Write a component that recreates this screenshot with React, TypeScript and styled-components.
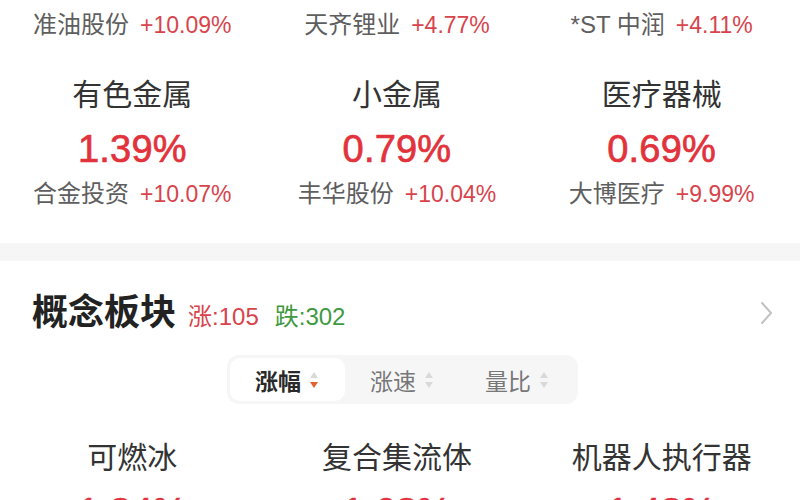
import React from "react";
import styled, { createGlobalStyle } from "styled-components";

const Global = createGlobalStyle`
  html, body { margin: 0; padding: 0; background: #ffffff; }
  body {
    width: 800px; height: 500px; overflow: hidden;
    font-family: "Liberation Sans", "Noto Sans CJK SC", sans-serif;
  }
`;

const Page = styled.div`
  width: 800px;
  display: flex;
  flex-direction: column;
`;

const Section = styled.section<{ $pad: string }>`
  background: #fff;
  padding: ${(p) => p.$pad};
`;

const Band = styled.div`
  height: 18px;
  background: #f6f6f6;
`;

const Grid = styled.div<{ $mt?: number }>`
  display: grid;
  grid-template-columns: repeat(3, 1fr);
  padding-right: 6px;
  margin-top: ${(p) => p.$mt ?? 0}px;
`;

const Card = styled.div`
  display: flex;
  flex-direction: column;
  align-items: center;
`;

const Name = styled.div`
  font-size: 30px;
  line-height: 36px;
  color: #333;
  white-space: nowrap;
`;

const Value = styled.div`
  margin-top: 14px;
  font-size: 38px;
  line-height: 44px;
  color: #e2323b;
  -webkit-text-stroke: 0.7px #e2323b;
  letter-spacing: 0.2px;
`;

const Lead = styled.div<{ $mt: number }>`
  margin-top: ${(p) => p.$mt}px;
  display: flex;
  align-items: baseline;
  gap: 11px;
  font-size: 24px;
  line-height: 30px;
  white-space: nowrap;
`;

const LeadName = styled.span`
  color: #5e5e5e;
`;

const LeadPct = styled.span`
  color: #d8444c;
  font-size: 23px;
`;

const Header = styled.div`
  display: flex;
  align-items: center;
  justify-content: space-between;
  padding: 0 27px 0 32px;
  height: 40px;
`;

const TitleWrap = styled.div`
  display: flex;
  align-items: baseline;
  gap: 12px;
`;

const Title = styled.h2`
  margin: 0;
  font-size: 36px;
  line-height: 40px;
  font-weight: 700;
  color: #222;
`;

const Counts = styled.span`
  display: inline-flex;
  gap: 16px;
`;

const Count = styled.span<{ $c: string }>`
  font-size: 24px;
  color: ${(p) => p.$c};
`;

const SegRow = styled.div`
  display: flex;
  justify-content: center;
  margin-top: 22px;
  padding-left: 4px;
`;

const Seg = styled.div`
  display: grid;
  grid-template-columns: repeat(3, 115px);
  padding: 3px;
  background: #f6f6f7;
  border-radius: 12px;
`;

const Tab = styled.div<{ $active?: boolean }>`
  height: 43px;
  display: flex;
  align-items: center;
  justify-content: center;
  gap: 8px;
  border-radius: 10px;
  background: ${(p) => (p.$active ? "#fff" : "transparent")};
  color: ${(p) => (p.$active ? "#2a2a2a" : "#777")};
  font-size: 23px;
  font-weight: ${(p) => (p.$active ? 600 : 400)};
`;

const Chevron = () => (
  <svg width="13" height="24" viewBox="0 0 13 24" fill="none">
    <path d="M2 2 L11 12 L2 22" stroke="#c2c2c2" strokeWidth="2" strokeLinecap="round" strokeLinejoin="round" />
  </svg>
);

const SortIcon = ({ active }: { active?: boolean }) => (
  <svg width="10" height="20" viewBox="0 0 10 20">
    <path d="M5 2 L9 8 L1 8 Z" fill="#d9d9d9" />
    <path d="M5 18 L9 12 L1 12 Z" fill={active ? "#e0622e" : "#d9d9d9"} />
  </svg>
);

type Item = { name: string; value: string; lead: string; pct: string };

const tail = [
  { lead: "准油股份", pct: "+10.09%" },
  { lead: "天齐锂业", pct: "+4.77%" },
  { lead: "*ST 中润", pct: "+4.11%" },
];

const industry: Item[] = [
  { name: "有色金属", value: "1.39%", lead: "合金投资", pct: "+10.07%" },
  { name: "小金属", value: "0.79%", lead: "丰华股份", pct: "+10.04%" },
  { name: "医疗器械", value: "0.69%", lead: "大博医疗", pct: "+9.99%" },
];

const concept: Item[] = [
  { name: "可燃冰", value: "1.84%", lead: "", pct: "" },
  { name: "复合集流体", value: "1.63%", lead: "", pct: "" },
  { name: "机器人执行器", value: "1.48%", lead: "", pct: "" },
];

export default function App() {
  return (
    <Page>
      <Global />
      <Section $pad="10px 0 34px">
        <Grid>
          {tail.map((t) => (
            <Card key={t.lead}>
              <Lead $mt={0}>
                <LeadName>{t.lead}</LeadName>
                <LeadPct>{t.pct}</LeadPct>
              </Lead>
            </Card>
          ))}
        </Grid>
        <Grid $mt={37}>
          {industry.map((c) => (
            <Card key={c.name}>
              <Name>{c.name}</Name>
              <Value>{c.value}</Value>
              <Lead $mt={8}>
                <LeadName>{c.lead}</LeadName>
                <LeadPct>{c.pct}</LeadPct>
              </Lead>
            </Card>
          ))}
        </Grid>
      </Section>
      <Band />
      <Section $pad="32px 0 0">
        <Header>
          <TitleWrap>
            <Title>概念板块</Title>
            <Counts>
              <Count $c="#d9434b">涨:105</Count>
              <Count $c="#3e9a40">跌:302</Count>
            </Counts>
          </TitleWrap>
          <Chevron />
        </Header>
        <SegRow>
          <Seg>
            <Tab $active>
              涨幅
              <SortIcon active />
            </Tab>
            <Tab>
              涨速
              <SortIcon />
            </Tab>
            <Tab>
              量比
              <SortIcon />
            </Tab>
          </Seg>
        </SegRow>
        <Grid $mt={36}>
          {concept.map((c) => (
            <Card key={c.name}>
              <Name>{c.name}</Name>
              <Value>{c.value}</Value>
            </Card>
          ))}
        </Grid>
      </Section>
    </Page>
  );
}
